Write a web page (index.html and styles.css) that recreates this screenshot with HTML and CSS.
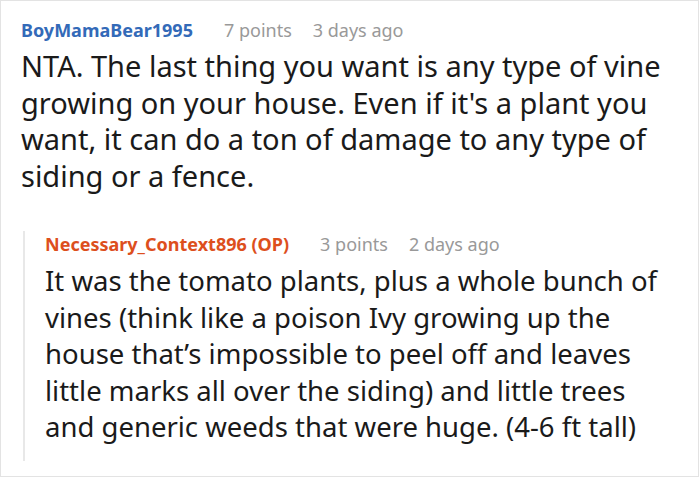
FILE: index.html
```html
<!DOCTYPE html>
<html>
<head>
<meta charset="utf-8">
<link rel="stylesheet" href="styles.css">
</head>
<body>
<div class="frame">
  <div class="comment">
    <div class="meta">
      <span class="author">BoyMamaBear1995</span>
      <span class="info">7 points</span>
      <span class="info">3 days ago</span>
    </div>
    <p class="body">NTA. The last thing you want is any type of vine growing on your house. Even if it's a plant you want, it can do a ton of damage to any type of siding or a fence.</p>
    <div class="reply">
      <div class="meta">
        <span class="author op">Necessary_Context896 (OP)</span>
        <span class="info">3 points</span>
        <span class="info">2 days ago</span>
      </div>
      <p class="body">It was the tomato plants, plus a whole bunch of vines (think like a poison Ivy growing up the house that’s impossible to peel off and leaves little marks all over the siding) and little trees and generic weeds that were huge. (4-6 ft tall)</p>
    </div>
  </div>
</div>
</body>
</html>
```

FILE: styles.css
```css
html, body {
  margin: 0;
  padding: 0;
  background: #ffffff;
}
.frame {
  width: 699px;
  height: 477px;
  box-sizing: border-box;
  border: 1px solid #e3e3e3;
  overflow: hidden;
  font-family: "Noto Sans", "Open Sans", sans-serif;
}
.comment {
  padding: 16px 20px 0 20px;
}
.meta {
  display: flex;
  gap: 21px;
  font-size: 18px;
  line-height: 26px;
  margin-bottom: 5px;
}
.author {
  font-weight: bold;
  color: #336ab8;
  margin-right: 10px;
}
.author.op {
  color: #dd4f1d;
}
.info {
  color: #999999;
}
.body {
  margin: 0;
  font-size: 29px;
  line-height: 36.5px;
  color: #1a1a1a;
}
.reply {
  margin-top: 48px;
  margin-left: 2px;
  border-left: 2px solid #e8e8e8;
  padding: 0 0 15px 20px;
}
.reply .meta {
  margin-top: -11px;
  margin-bottom: 6px;
}
.reply .body {
  font-size: 27.5px;
}
```
